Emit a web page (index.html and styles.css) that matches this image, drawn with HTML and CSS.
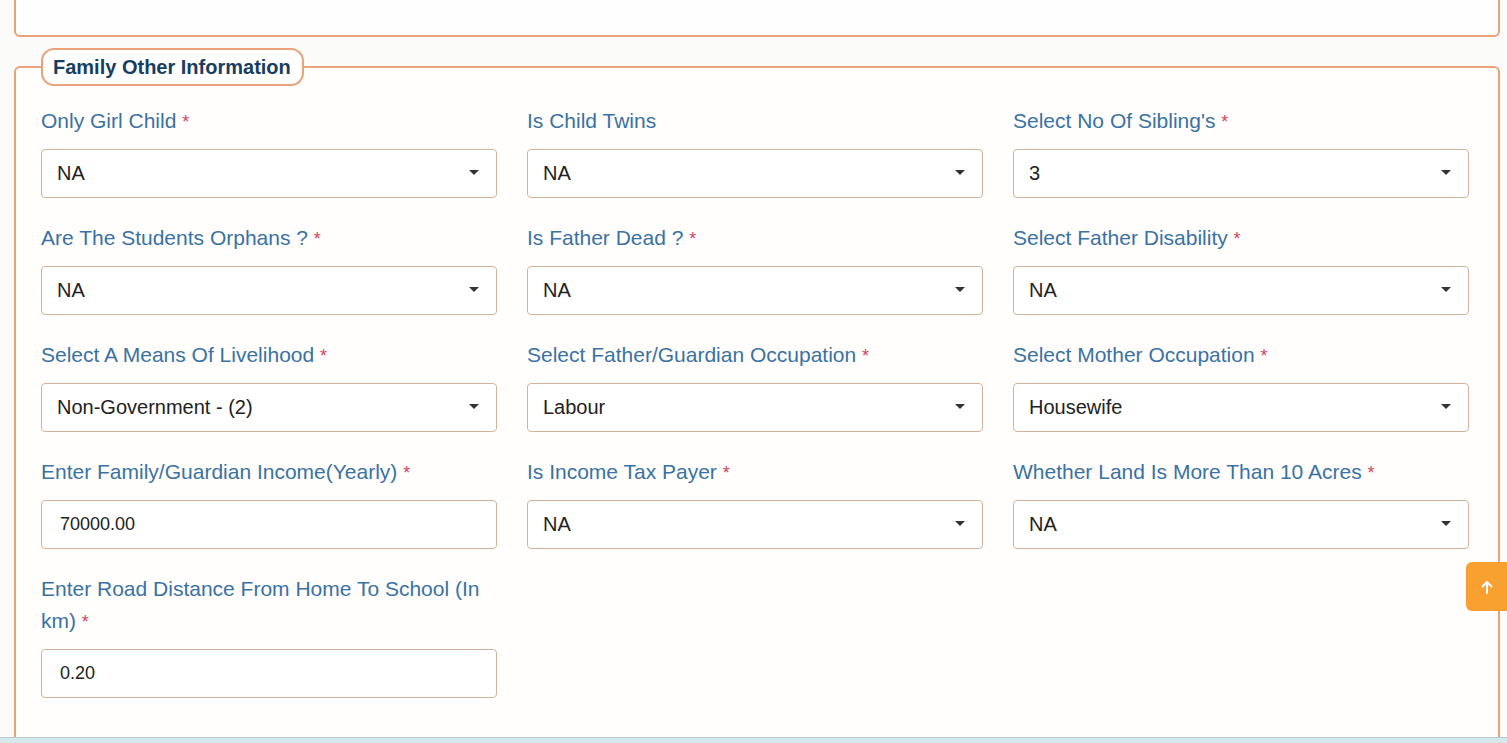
FILE: index.html
```html
<!DOCTYPE html>
<html lang="en">
<head>
<meta charset="utf-8">
<title>Family Other Information</title>
<link rel="stylesheet" href="styles.css">
</head>
<body>
<div class="page">
  <div class="top-card"></div>

  <fieldset class="section">
    <legend class="section-title">Family Other Information</legend>
    <div class="form-grid">
      <div class="field">
        <label class="field-label">Only Girl Child <span class="req">*</span></label>
        <div class="select">NA</div>
      </div>
      <div class="field">
        <label class="field-label">Is Child Twins</label>
        <div class="select">NA</div>
      </div>
      <div class="field">
        <label class="field-label">Select No Of Sibling's <span class="req">*</span></label>
        <div class="select">3</div>
      </div>

      <div class="field">
        <label class="field-label">Are The Students Orphans ? <span class="req">*</span></label>
        <div class="select">NA</div>
      </div>
      <div class="field">
        <label class="field-label">Is Father Dead ? <span class="req">*</span></label>
        <div class="select">NA</div>
      </div>
      <div class="field">
        <label class="field-label">Select Father Disability <span class="req">*</span></label>
        <div class="select">NA</div>
      </div>

      <div class="field">
        <label class="field-label">Select A Means Of Livelihood <span class="req">*</span></label>
        <div class="select">Non-Government - (2)</div>
      </div>
      <div class="field">
        <label class="field-label">Select Father/Guardian Occupation <span class="req">*</span></label>
        <div class="select">Labour</div>
      </div>
      <div class="field">
        <label class="field-label">Select Mother Occupation <span class="req">*</span></label>
        <div class="select">Housewife</div>
      </div>

      <div class="field">
        <label class="field-label">Enter Family/Guardian Income(Yearly) <span class="req">*</span></label>
        <div class="input">70000.00</div>
      </div>
      <div class="field">
        <label class="field-label">Is Income Tax Payer <span class="req">*</span></label>
        <div class="select">NA</div>
      </div>
      <div class="field">
        <label class="field-label">Whether Land Is More Than 10 Acres <span class="req">*</span></label>
        <div class="select">NA</div>
      </div>

      <div class="field">
        <label class="field-label">Enter Road Distance From Home To School (In km) <span class="req">*</span></label>
        <div class="input">0.20</div>
      </div>
    </div>
  </fieldset>
</div>

<button class="to-top" type="button" aria-label="Back to top">
  <svg width="12" height="14" viewBox="0 0 12 14" fill="none" stroke="#fff" stroke-width="2" stroke-linecap="round" stroke-linejoin="round">
    <path d="M6 13V2"/>
    <path d="M1.5 6.5L6 2l4.5 4.5"/>
  </svg>
</button>

<div class="footer-band"></div>
</body>
</html>
```

FILE: styles.css
```css
* {
  box-sizing: border-box;
}

html, body {
  margin: 0;
  padding: 0;
}

body {
  background: #fbfbfa;
  font-family: "Liberation Sans", Arial, sans-serif;
  overflow: hidden;
  height: 743px;
}

.page {
  margin: 0 7px 0 14px;
}

.top-card {
  height: 37px;
  border: 2px solid #e9a27a;
  border-top: none;
  border-radius: 0 0 6px 6px;
  background: #fefefe;
}

.section {
  margin: 11px 0 0 0;
  padding: 19px 28px 60px 25px;
  border: 2px solid #e9a27a;
  border-radius: 6px;
  background: #fffefd;
  min-width: 0;
}

.section-title {
  margin: 0;
  padding: 0 11px 0 10px;
  height: 38px;
  line-height: 34px;
  border: 2px solid #e9a27a;
  border-radius: 13px;
  background: #fff;
  color: #173e5e;
  font-size: 20px;
  font-weight: bold;
}

.form-grid {
  display: grid;
  grid-template-columns: repeat(3, 456px);
  column-gap: 30px;
  row-gap: 24px;
}

.field {
  display: flex;
  flex-direction: column;
  gap: 12px;
}

.field-label {
  display: block;
  font-size: 21px;
  line-height: 32px;
  color: #3a72a3;
}

.req {
  color: #d2455e;
  font-size: 18px;
  line-height: 1;
  vertical-align: baseline;
}

.select,
.input {
  position: relative;
  height: 49px;
  border: 1px solid #d3b39c;
  border-radius: 4px;
  background: #fff;
  color: #222;
  display: flex;
  align-items: center;
}

.select {
  padding-left: 15px;
  font-size: 20px;
}

.select::after {
  content: "";
  position: absolute;
  right: 17px;
  top: 20px;
  border-left: 5px solid transparent;
  border-right: 5px solid transparent;
  border-top: 5px solid #333;
}

.input {
  padding-left: 18px;
  font-size: 18px;
}

.to-top {
  position: fixed;
  right: -8px;
  top: 562px;
  width: 49px;
  height: 49px;
  padding: 0 8px 0 0;
  border: none;
  border-radius: 6px;
  background: #f8a030;
  display: flex;
  align-items: center;
  justify-content: center;
  cursor: pointer;
}

.footer-band {
  position: fixed;
  left: 0;
  right: 0;
  bottom: 0;
  height: 6px;
  background: #d5e8ec;
  border-top: 1px solid #b9cdd2;
}
```
